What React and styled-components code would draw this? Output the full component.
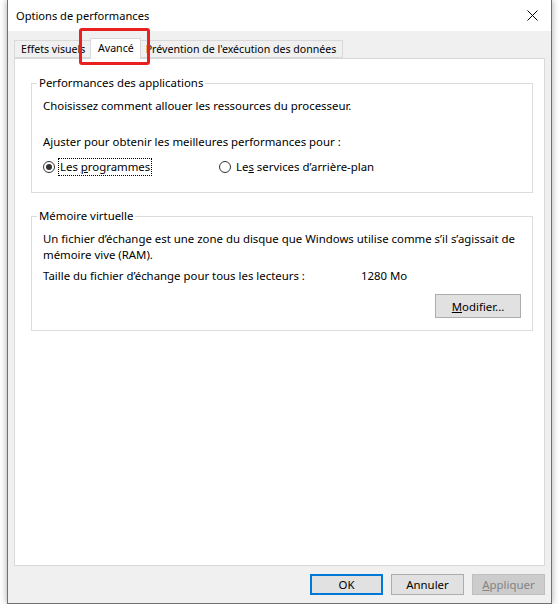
import { styled, createGlobalStyle } from 'styled-components';

const GlobalStyle = createGlobalStyle`
  html, body {
    margin: 0;
    padding: 0;
    background: #ffffff;
  }
  body {
    font-family: "Segoe UI", "Noto Sans", sans-serif;
    font-size: 11.4px;
    color: #000;
  }
`;

const Window = styled.div`
  position: relative;
  box-sizing: border-box;
  width: 545px;
  height: 604px;
  margin-left: 7px;
  border: 1px solid #707070;
  border-top: none;
  background: #f0f0f0;
  box-shadow: 0 0 7px rgba(0, 0, 0, 0.35);
  display: flex;
  flex-direction: column;
`;

const TitleBar = styled.div`
  height: 31px;
  background: #ffffff;
  display: flex;
  align-items: center;
  justify-content: space-between;
  padding: 0 9px 0 8px;
  line-height: 16px;
  font-size: 11.1px;
`;

const CloseButton = styled.div`
  width: 12px;
  height: 12px;
  display: flex;
  align-items: center;
  justify-content: center;
  margin-right: 4px;
`;

const Body = styled.div`
  flex: 1;
  display: flex;
  flex-direction: column;
  padding: 7px 6px 8px 6px;
`;

const TabRow = styled.div`
  display: flex;
  align-items: flex-end;
  height: 20px;
  position: relative;
  z-index: 1;
  font-size: 10.6px;
`;

const Tab = styled.div`
  box-sizing: border-box;
  width: ${(p) => (p.$w ? `${p.$w}px` : 'auto')};
  height: ${(p) => (p.$active ? '21px' : '18px')};
  padding: ${(p) => (p.$active ? '1px 6px 0 7px' : '0 6px')};
  margin: ${(p) => (p.$active ? '0 -2px -1px -2px' : '0')};
  border: 1px solid #d9d9d9;
  border-bottom: ${(p) => (p.$active ? 'none' : '1px solid #d9d9d9')};
  background: ${(p) => (p.$active ? '#ffffff' : '#f0f0f0')};
  line-height: 16px;
  white-space: nowrap;
  position: relative;
  z-index: ${(p) => (p.$active ? 2 : 0)};
`;

const Highlight = styled.div`
  position: absolute;
  left: 71px;
  top: 28px;
  width: 65px;
  height: 31px;
  border: 3px solid #e8201f;
  border-radius: 3px;
  pointer-events: none;
  z-index: 5;
`;

const Panel = styled.div`
  flex: 1;
  background: #ffffff;
  border: 1px solid #d9d9d9;
  padding: 16px 11px 0 16px;
`;

const Group = styled.fieldset`
  margin: 0 0 ${(p) => p.$gap || 0}px 0;
  padding: 7px 11px ${(p) => p.$bottom}px 11px;
  border: 1px solid #dcdcdc;
  min-width: 0;
`;

const Legend = styled.legend`
  padding: 0 2px;
  margin-left: -6px;
  line-height: 16px;
`;

const Line = styled.div`
  line-height: 16px;
  white-space: nowrap;
  margin-top: ${(p) => p.$top || 0}px;
`;

const RadioRow = styled.div`
  display: grid;
  grid-template-columns: 176px auto;
  margin-top: 8px;
  line-height: 16px;
`;

const Radio = styled.label`
  display: flex;
  align-items: center;
  gap: 3px;
`;

const RadioCircle = styled.span`
  box-sizing: border-box;
  width: 12px;
  height: 12px;
  border-radius: 50%;
  border: 1px solid #333333;
  display: flex;
  align-items: center;
  justify-content: center;
  &::after {
    content: '';
    width: 6px;
    height: 6px;
    border-radius: 50%;
    background: ${(p) => (p.$checked ? '#333333' : 'transparent')};
  }
`;

const RadioText = styled.span`
  padding: 0 1px;
  border: 1px dotted ${(p) => (p.$focused ? '#000' : 'transparent')};
`;

const SizeRow = styled.div`
  display: grid;
  grid-template-columns: 318px auto;
  line-height: 16px;
  margin-top: 5px;
`;

const RightRow = styled.div`
  display: flex;
  justify-content: flex-end;
  margin-top: 10px;
`;

const Button = styled.button`
  box-sizing: border-box;
  width: ${(p) => p.$w}px;
  height: ${(p) => p.$h}px;
  font-family: inherit;
  font-size: 11.4px;
  padding: 0;
  background: ${(p) => (p.$disabled ? '#cccccc' : '#e1e1e1')};
  color: ${(p) => (p.$disabled ? '#838383' : '#000')};
  border: ${(p) =>
    p.$default ? '2px solid #0078d7' : p.$disabled ? '1px solid #bfbfbf' : '1px solid #adadad'};
  border-radius: 0;
  cursor: default;
`;

const Footer = styled.div`
  display: flex;
  justify-content: flex-end;
  gap: 8px;
  margin-top: 8px;
`;

export default function App() {
  return (
    <>
      <GlobalStyle />
      <Window>
        <TitleBar>
          <span>Options de performances</span>
          <CloseButton>
            <svg width="11" height="11" viewBox="0 0 11 11">
              <path d="M0.5 0.5 L10.5 10.5 M10.5 0.5 L0.5 10.5" stroke="#000" strokeWidth="1" fill="none" />
            </svg>
          </CloseButton>
        </TitleBar>
        <Highlight />
        <Body>
          <TabRow>
            <Tab $w={78}>Effets visuels</Tab>
            <Tab $active>Avancé</Tab>
            <Tab>Prévention de l'exécution des données</Tab>
          </TabRow>
          <Panel>
            <Group $gap={15} $bottom={16}>
              <Legend>Performances des applications</Legend>
              <Line>Choisissez comment allouer les ressources du processeur.</Line>
              <Line $top={20}>Ajuster pour obtenir les meilleures performances pour :</Line>
              <RadioRow>
                <Radio>
                  <RadioCircle $checked />
                  <RadioText $focused>
                    Les <u>p</u>rogrammes
                  </RadioText>
                </Radio>
                <Radio>
                  <RadioCircle />
                  <RadioText>
                    Le<u>s</u> services d’arrière-plan
                  </RadioText>
                </Radio>
              </RadioRow>
            </Group>
            <Group $bottom={12}>
              <Legend>Mémoire virtuelle</Legend>
              <Line>
                Un fichier d’échange est une zone du disque que Windows utilise comme s’il s’agissait de
                <br />
                mémoire vive (RAM).
              </Line>
              <SizeRow>
                <span>Taille du fichier d’échange pour tous les lecteurs :</span>
                <span>1280 Mo</span>
              </SizeRow>
              <RightRow>
                <Button $w={86} $h={24}>
                  <u>M</u>odifier...
                </Button>
              </RightRow>
            </Group>
          </Panel>
          <Footer>
            <Button $w={73} $h={21} $default>
              OK
            </Button>
            <Button $w={73} $h={21}>
              Annuler
            </Button>
            <Button $w={73} $h={21} $disabled>
              <u>A</u>ppliquer
            </Button>
          </Footer>
        </Body>
      </Window>
    </>
  );
}
